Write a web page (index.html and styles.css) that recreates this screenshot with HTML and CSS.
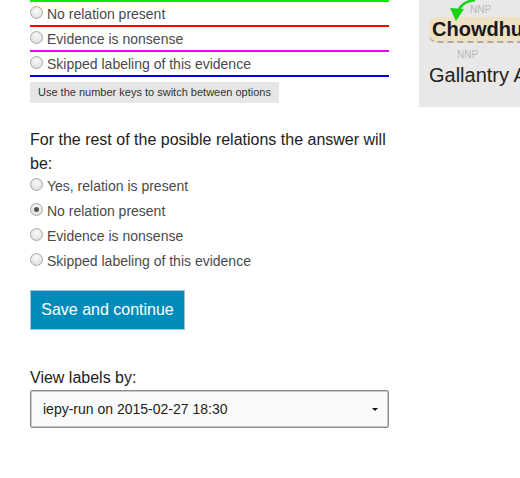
FILE: index.html
```html
<!DOCTYPE html>
<html>
<head>
<meta charset="utf-8">
<link rel="stylesheet" href="styles.css">
</head>
<body>
<div class="page">
  <div class="main">
    <div class="options">
      <label class="opt opt-red"><span class="radio"></span>No relation present</label>
      <label class="opt opt-magenta"><span class="radio"></span>Evidence is nonsense</label>
      <label class="opt opt-blue"><span class="radio"></span>Skipped labeling of this evidence</label>
    </div>
    <div class="hint">Use the number keys to switch between options</div>

    <p class="rest">For the rest of the posible relations the answer will be:</p>
    <div class="rest-options">
      <label class="ropt"><span class="radio"></span>Yes, relation is present</label>
      <label class="ropt"><span class="radio checked"></span>No relation present</label>
      <label class="ropt"><span class="radio"></span>Evidence is nonsense</label>
      <label class="ropt"><span class="radio"></span>Skipped labeling of this evidence</label>
    </div>

    <button class="save">Save and continue</button>

    <div class="view-label">View labels by:</div>
    <div class="select">
      <span>iepy-run on 2015-02-27 18:30</span>
      <span class="caret"></span>
    </div>
  </div>

  <div class="side">
    <svg class="arrow" width="30" height="24" viewBox="0 0 30 24">
      <path d="M26 0 Q15 1 10 9" fill="none" stroke="#14d414" stroke-width="2.5"/>
      <polygon points="1,8 15,9 7,21" fill="#14d414"/>
    </svg>
    <span class="pos pos-1">NNP</span>
    <span class="pos pos-2">NNP</span>
    <div class="word word-ent">Chowdhury</div>
    <div class="word word-plain">Gallantry Award</div>
  </div>
</div>
</body>
</html>
```

FILE: styles.css
```css
html, body {
  margin: 0;
  padding: 0;
  background: #fff;
}
body {
  font-family: "Liberation Sans", Arial, sans-serif;
  color: #222;
  overflow: hidden;
}
.page {
  display: flex;
  align-items: flex-start;
  padding-left: 30px;
  gap: 30px;
}
.main {
  width: 359px;
  flex: none;
  display: flex;
  flex-direction: column;
  align-items: flex-start;
}
.options {
  width: 100%;
  border-top: 2px solid #00ee00;
}
.opt {
  display: flex;
  align-items: center;
  height: 23px;
  font-size: 14px;
  color: #4a4a4a;
  border-bottom: 2px solid;
}
.opt-red { border-bottom-color: #ff0000; }
.opt-magenta { border-bottom-color: #ee00ee; }
.opt-blue { border-bottom-color: #0000ee; }
.radio {
  width: 11px;
  height: 11px;
  border-radius: 50%;
  border: 1px solid #a9a9a9;
  background: radial-gradient(circle at 50% 35%, #fafafa 0%, #e2e2e2 70%, #d0d0d0 100%);
  margin-right: 4px;
  flex: none;
  box-sizing: content-box;
  position: relative;
  top: -1px;
}
.radio.checked::after {
  content: "";
  position: absolute;
  left: 3px;
  top: 3px;
  width: 5px;
  height: 5px;
  border-radius: 50%;
  background: #555;
}
.hint {
  margin-top: 5px;
  background: #e6e6e6;
  font-size: 11px;
  color: #333;
  padding: 0 8px;
  height: 21px;
  line-height: 21px;
}
.rest {
  margin: 25px 0 0;
  font-size: 16px;
  line-height: 24px;
  color: #222;
}
.rest-options {
  display: flex;
  flex-direction: column;
  margin-top: -3px;
}
.ropt {
  display: flex;
  align-items: center;
  height: 25px;
  font-size: 14px;
  color: #4a4a4a;
}
.save {
  margin-top: 17px;
  background: #008cba;
  color: #fff;
  font-family: inherit;
  font-size: 16px;
  border: 1px solid #9fc4d4;
  height: 40px;
  width: 155px;
  padding: 0;
  cursor: pointer;
}
.view-label {
  margin-top: 38px;
  font-size: 16px;
  line-height: 20px;
  color: #222;
}
.select {
  margin-top: 2px;
  box-sizing: border-box;
  width: 100%;
  height: 38px;
  border: 1px solid #8a8a8a;
  border-radius: 2px;
  background: #fafafa;
  display: flex;
  align-items: center;
  justify-content: space-between;
  padding: 0 10px 0 12px;
  font-size: 14px;
  color: #222;
  box-shadow: inset 0 0 0 1px #c8c8c8;
}
.caret {
  width: 0;
  height: 0;
  border-left: 3px solid transparent;
  border-right: 3px solid transparent;
  border-top: 3px solid #111;
}
.side {
  flex: 1;
  height: 107px;
  background: #e8e8e8;
  position: relative;
  overflow: hidden;
  padding-top: 17px;
  padding-left: 10px;
  box-sizing: border-box;
  white-space: nowrap;
  display: flex;
  flex-direction: column;
  align-items: flex-start;
}
.arrow {
  position: absolute;
  left: 30px;
  top: 0;
  z-index: 2;
}
.pos {
  position: absolute;
  font-size: 10px;
  line-height: 12px;
  color: #b8b8b8;
}
.pos-1 { left: 51px; top: 4px; }
.pos-2 { left: 38px; top: 49px; }
.word {
  font-size: 20px;
}
.word-ent {
  background: #eee1c4;
  border-radius: 7px 7px 8px 8px;
  border-bottom: 2px dashed #aaa;
  font-weight: bold;
  padding: 0 8px 0 3px;
  height: 24px;
  line-height: 24px;
  color: #1a1a1a;
}
.word-plain {
  margin-top: 20px;
  line-height: 24px;
  color: #222;
}
```
